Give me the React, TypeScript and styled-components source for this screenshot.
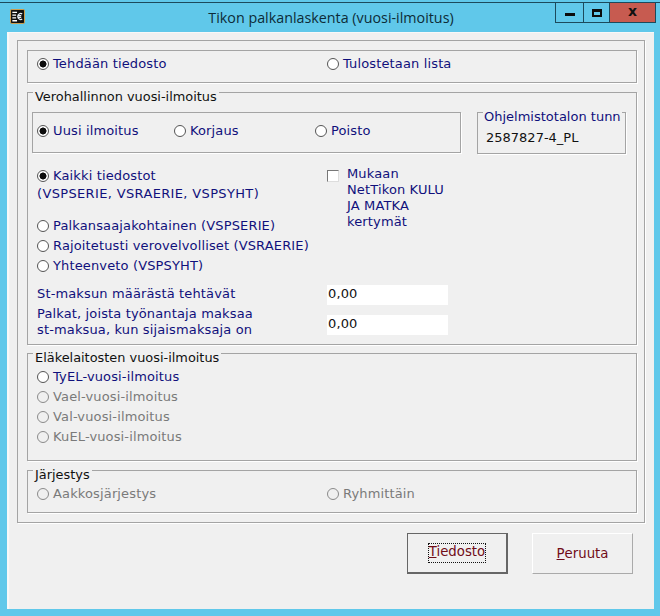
import React from 'react';
import styled, { createGlobalStyle } from 'styled-components';

const GlobalStyle = createGlobalStyle`
  html, body {
    margin: 0;
    padding: 0;
    background: #60c8ea;
  }
`;

function AppIcon() {
  return (
    <svg width="15" height="15" viewBox="0 0 16 16">
      <rect x="0.5" y="0.5" width="15" height="15" rx="1.5" fill="#111" stroke="#dca24a" />
      <path d="M2.5 3.5h5M2.5 6.5h4M2.5 9.5h4M2.5 12.5h5" stroke="#fff" strokeWidth="1.4" />
      <path d="M13 5.2a3.2 3.2 0 1 0 0 5.6M8 7h4M8 9h4" fill="none" stroke="#e8f0f8" strokeWidth="1.3" />
    </svg>
  );
}

export default function App() {
  return (
    <>
      <GlobalStyle />
      <Window>
        <TitleBar>
          <IconSlot>
            <AppIcon />
          </IconSlot>
          <Title>Tikon palkanlaskenta (vuosi-ilmoitus)</Title>
          <WindowButtons>
            <WindowButton $width={28}>
              <MinimizeGlyph />
            </WindowButton>
            <WindowButton $width={26}>
              <MaximizeGlyph />
            </WindowButton>
            <CloseButton>x</CloseButton>
          </WindowButtons>
        </TitleBar>

        <Client>
          <OuterGroup>
            <Group $height={33} $gap={0}>
              <TopChoiceRow>
                <Option checked label="Tehdään tiedosto" />
                <Option label="Tulostetaan lista" />
              </TopChoiceRow>
            </Group>

            <Group $height={253} $gap={9}>
              <Legend>Verohallinnon vuosi-ilmoitus</Legend>
              <HeaderRow>
                <NoticeBox>
                  <NoticeSlot $width={137}>
                    <Option checked label="Uusi ilmoitus" />
                  </NoticeSlot>
                  <NoticeSlot $width={141}>
                    <Option label="Korjaus" />
                  </NoticeSlot>
                  <NoticeSlot $width={100}>
                    <Option label="Poisto" />
                  </NoticeSlot>
                </NoticeBox>
                <ProgramBox>
                  <ProgramLegend>Ohjelmistotalon tunn</ProgramLegend>
                  <ProgramValue>2587827-4_PL</ProgramValue>
                </ProgramBox>
              </HeaderRow>

              <FileChoice>
                <FileList>
                  <Option checked label="Kaikki tiedostot" />
                  <SubLine>(VSPSERIE, VSRAERIE, VSPSYHT)</SubLine>
                  <Option label="Palkansaajakohtainen (VSPSERIE)" />
                  <Option label="Rajoitetusti verovelvolliset (VSRAERIE)" />
                  <Option label="Yhteenveto (VSPSYHT)" />
                </FileList>
                <CheckRow>
                  <CheckBox />
                  <CheckLabel>
                    Mukaan
                    <br />
                    NetTikon KULU
                    <br />
                    JA MATKA
                    <br />
                    kertymät
                  </CheckLabel>
                </CheckRow>
              </FileChoice>

              <AmountRow>
                <AmountLabel>St-maksun määrästä tehtävät</AmountLabel>
                <AmountField>0,00</AmountField>
              </AmountRow>
              <AmountRowTall>
                <AmountLabelTall>
                  Palkat, joista työnantaja maksaa
                  <br />
                  st-maksua, kun sijaismaksaja on
                </AmountLabelTall>
                <AmountFieldLow>0,00</AmountFieldLow>
              </AmountRowTall>
            </Group>

            <Group $height={108} $gap={8}>
              <Legend>Eläkelaitosten vuosi-ilmoitus</Legend>
              <PensionList>
                <Option label="TyEL-vuosi-ilmoitus" />
                <Option disabled label="Vael-vuosi-ilmoitus" />
                <Option disabled label="Val-vuosi-ilmoitus" />
                <Option disabled label="KuEL-vuosi-ilmoitus" />
              </PensionList>
            </Group>

            <Group $height={43} $gap={9}>
              <Legend>Järjestys</Legend>
              <OrderRow>
                <Option disabled label="Aakkosjärjestys" />
                <Option disabled label="Ryhmittäin" />
              </OrderRow>
            </Group>
          </OuterGroup>

          <ButtonRow>
            <DefaultButton>
              <FocusRing>
                <Hotkey>T</Hotkey>iedosto
              </FocusRing>
            </DefaultButton>
            <PlainButton>
              <Hotkey>P</Hotkey>eruuta
            </PlainButton>
          </ButtonRow>
        </Client>
      </Window>
    </>
  );
}

function Option({ label, checked, disabled }: { label: string; checked?: boolean; disabled?: boolean }) {
  return (
    <OptionRow $disabled={disabled}>
      <Radio $checked={checked} $disabled={disabled} />
      <OptionText>{label}</OptionText>
    </OptionRow>
  );
}

const Window = styled.div`
  width: 660px;
  height: 616px;
  display: flex;
  flex-direction: column;
  overflow: hidden;
  background: #60c8ea;
  font-family: 'DejaVu Sans', Verdana, sans-serif;
  font-size: 13px;
  letter-spacing: 0.14px;
`;

const TitleBar = styled.div`
  position: relative;
  height: 29px;
  margin-top: 2px;
  border-top: 1px solid #1c4a5c;
  display: flex;
  flex-shrink: 0;
`;

const IconSlot = styled.div`
  width: 26px;
  padding: 6px 0 0 10px;
  box-sizing: border-box;
`;

const Title = styled.div`
  flex: 1;
  padding: 4px 0 0 0;
  margin-left: -24px;
  text-align: center;
  font-family: 'Open Sans', 'Noto Sans', sans-serif;
  font-size: 14.3px;
  letter-spacing: 0;
  line-height: 22px;
  color: #0d2c38;
`;

const WindowButtons = styled.div`
  position: absolute;
  top: 0;
  right: 4px;
  display: flex;
  height: 20px;
`;

const WindowButton = styled.div<{ $width: number }>`
  width: ${(p) => p.$width}px;
  box-sizing: border-box;
  border: 1px solid #1c4a5c;
  border-top: 0;
  border-right: 0;
  display: flex;
  align-items: center;
  justify-content: center;
`;

const MinimizeGlyph = styled.span`
  width: 10px;
  height: 3px;
  margin-top: 4px;
  background: #0c0c0c;
`;

const MaximizeGlyph = styled.span`
  width: 10px;
  height: 8px;
  box-sizing: border-box;
  border: 2px solid #0c0c0c;
  border-top-width: 3px;
`;

const CloseButton = styled.div`
  width: 47px;
  box-sizing: border-box;
  border: 1px solid #1c4a5c;
  border-top: 0;
  background: #c75b50;
  color: #111;
  font-size: 14px;
  font-weight: bold;
  line-height: 16px;
  text-align: center;
`;

const Client = styled.div`
  flex-shrink: 0;
  width: 647px;
  height: 577px;
  margin-left: 7px;
  box-sizing: border-box;
  padding: 7px 9px 0 10px;
  background: #f0f0f0;
  border-top: 1px solid #f8f8f8;
  border-left: 2px solid #f8f8f8;
`;

const OuterGroup = styled.div`
  width: 628px;
  height: 483px;
  margin-left: -2px;
  box-sizing: border-box;
  padding: 9px 7px 0 9px;
  display: flex;
  flex-direction: column;
  border: 1px solid #a4a4a4;
  box-shadow: 1px 1px 0 #fff;
`;

const Group = styled.div<{ $height: number; $gap: number }>`
  position: relative;
  height: ${(p) => p.$height}px;
  margin-top: ${(p) => p.$gap}px;
  flex-shrink: 0;
  box-sizing: border-box;
  border: 1px solid #a4a4a4;
  box-shadow: 1px 1px 0 #fff;
`;

const Legend = styled.div`
  position: absolute;
  top: -4px;
  left: 5px;
  padding: 0 2px;
  background: #f0f0f0;
  font-size: 12.9px;
  letter-spacing: 0;
  line-height: 16px;
  color: #111;
`;

const OptionRow = styled.div<{ $disabled?: boolean }>`
  display: flex;
  align-items: center;
  gap: 4px;
  height: 20px;
  white-space: nowrap;
  color: ${(p) => (p.$disabled ? '#7a7a7a' : '#10107c')};
`;

const OptionText = styled.span`
  margin-bottom: 2px;
`;

const Radio = styled.span<{ $checked?: boolean; $disabled?: boolean }>`
  width: 12px;
  height: 12px;
  flex-shrink: 0;
  box-sizing: border-box;
  border-radius: 50%;
  border: 1px solid ${(p) => (p.$disabled ? '#8a8a8a' : '#555')};
  background: radial-gradient(
    circle,
    ${(p) => (p.$checked ? '#0c0c0c 0 3.2px, #fff 3.8px' : p.$disabled ? '#f0f0f0 0 100%' : '#fff 0 100%')}
  );
`;

const TopChoiceRow = styled.div`
  display: grid;
  grid-template-columns: 290px auto;
  justify-content: start;
  padding: 3px 0 0 9px;
`;

const HeaderRow = styled.div`
  display: flex;
  align-items: flex-start;
  gap: 16px;
  padding: 19px 0 0 4px;
`;

const NoticeBox = styled.div`
  width: 429px;
  height: 41px;
  box-sizing: border-box;
  padding: 8px 0 0 4px;
  display: flex;
  border: 1px solid #a4a4a4;
  box-shadow: 1px 1px 0 #fff;
`;

const NoticeSlot = styled.div<{ $width: number }>`
  width: ${(p) => p.$width}px;
`;

const ProgramBox = styled.div`
  position: relative;
  width: 149px;
  height: 42px;
  box-sizing: border-box;
  border: 1px solid #a4a4a4;
  box-shadow: 1px 1px 0 #fff;
`;

const ProgramLegend = styled.div`
  position: absolute;
  top: -4px;
  left: 5px;
  padding: 0 1px;
  background: #f0f0f0;
  letter-spacing: 0;
  line-height: 16px;
  white-space: nowrap;
  color: #10107c;
`;

const ProgramValue = styled.div`
  padding: 17px 0 0 8px;
  line-height: 16px;
  letter-spacing: 0;
  color: #111;
`;

const FileChoice = styled.div`
  display: grid;
  grid-template-columns: 290px auto;
  justify-content: start;
  padding: 12px 0 0 9px;
`;

const FileList = styled.div`
  display: flex;
  flex-direction: column;
`;

const SubLine = styled.div`
  height: 30px;
  line-height: 16px;
  letter-spacing: 0.35px;
  color: #10107c;
  white-space: nowrap;
`;

const CheckRow = styled.div`
  display: flex;
  gap: 8px;
`;

const CheckBox = styled.span`
  width: 12px;
  height: 12px;
  margin-top: 4px;
  box-sizing: border-box;
  background: #fff;
  border: 1px solid #777;
  border-right-color: #ddd;
  border-bottom-color: #ddd;
`;

const CheckLabel = styled.div`
  line-height: 16px;
  color: #10107c;
`;

const AmountRow = styled.div`
  display: grid;
  grid-template-columns: 290px 121px;
  justify-content: start;
  align-items: start;
  padding: 9px 0 0 9px;
`;

const AmountRowTall = styled(AmountRow)`
  padding-top: 0;
  margin-top: -1px;
`;

const AmountLabel = styled.div`
  line-height: 16px;
  padding-top: 1px;
  white-space: nowrap;
  color: #10107c;
`;

const AmountLabelTall = styled(AmountLabel)`
  padding-top: 2px;
`;

const AmountField = styled.div`
  height: 20px;
  line-height: 18px;
  padding-left: 1px;
  background: #fff;
  color: #111;
`;

const AmountFieldLow = styled(AmountField)`
  margin-top: 11px;
`;

const PensionList = styled.div`
  display: flex;
  flex-direction: column;
  padding: 13px 0 0 9px;
`;

const OrderRow = styled.div`
  display: grid;
  grid-template-columns: 290px auto;
  justify-content: start;
  padding: 13px 0 0 9px;
`;

const ButtonRow = styled.div`
  display: flex;
  justify-content: flex-end;
  gap: 24px;
  padding: 10px 12px 0 0;
`;

const ActionButton = styled.div`
  width: 101px;
  height: 41px;
  box-sizing: border-box;
  display: flex;
  align-items: center;
  justify-content: center;
  font-size: 13.3px;
  letter-spacing: 0;
  color: #700c18;
`;

const DefaultButton = styled(ActionButton)`
  border: 1px solid #666;
  border-right-width: 2px;
  border-bottom-width: 2px;
`;

const PlainButton = styled(ActionButton)`
  border: 1px solid #aaa;
  border-top-color: #fff;
  border-left-color: #fff;
`;

const FocusRing = styled.span`
  width: 58px;
  height: 20px;
  box-sizing: border-box;
  line-height: 18px;
  text-align: center;
  outline: 1px dotted #111;
  outline-offset: -1px;
  white-space: nowrap;
`;

const Hotkey = styled.span`
  text-decoration: underline;
`;
